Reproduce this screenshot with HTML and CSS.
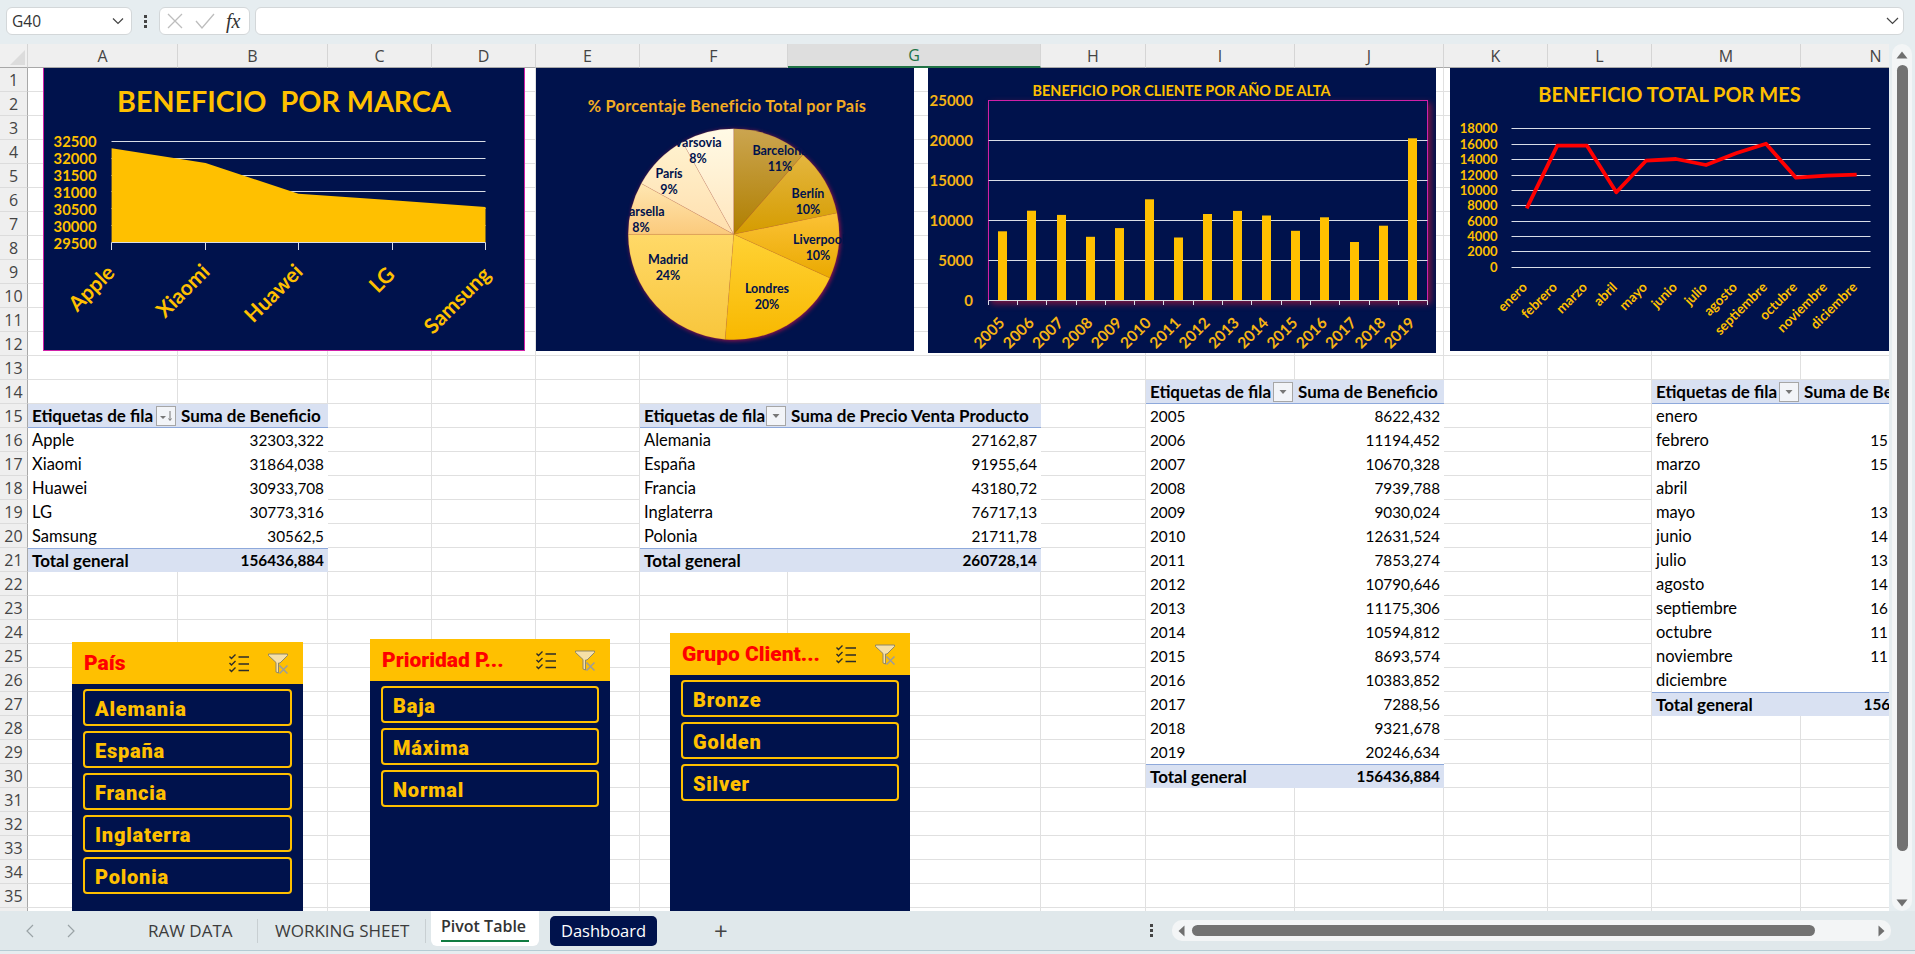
FILE: index.html
```html
<!DOCTYPE html>
<html lang="es">
<head>
    <meta charset="UTF-8">
    <title>Pivot Table</title>
    <link rel="stylesheet" href="styles.css">
</head>
<body>
    <svg class="icon-defs" width="0" height="0">
        <symbol id="icon-multi" viewBox="0 0 20 19">
            <path d="M0.500 2.500l2 2 4-4M0.500 9l2 2 4-4M0.500 15.500l2 2 4-4" fill="none" stroke="#2b2b2b" stroke-width="1.400"/>
            <path d="M9.500 3h10.500M9.500 10h10.500M9.500 16.500h10.500" fill="none" stroke="#2b2b2b" stroke-width="1.400"/>
        </symbol>
        <symbol id="icon-clear" viewBox="0 0 20 21">
            <path d="M0.500 1h19v1.500l-7.500 7.500h-1.500v10l-2.500-1v-9.500l-7.500-7z" fill="#f6e0a8" stroke="#8f8769" stroke-width="1"/>
            <path d="M11.500 12.500l8 8M19.500 12.500l-8 8" fill="none" stroke="#9c9c9c" stroke-width="1.500"/>
        </symbol>
    </svg>

    <!-- formula bar -->
    <div class="formula-bar">
        <div class="name-box">
            <span>G40</span>
            <svg width="12" height="8" viewBox="0 0 12 8"><path d="M1 1.500l5 5 5-5" fill="none" stroke="#444" stroke-width="1.200"/></svg>
        </div>
        <div class="bar-dots"><i></i><i></i><i></i></div>
        <div class="fx-box">
            <svg width="16" height="16" viewBox="0 0 16 16"><path d="M1 1l14 14M15 1L1 15" fill="none" stroke="#bdbdbd" stroke-width="1.300"/></svg>
            <svg width="20" height="16" viewBox="0 0 20 16"><path d="M1 8l6 7L19 1" fill="none" stroke="#bdbdbd" stroke-width="1.300"/></svg>
            <span class="fx-label">fx</span>
        </div>
        <div class="formula-input">
            <svg width="13" height="8" viewBox="0 0 13 8"><path d="M1 1l5.500 5.500L12 1" fill="none" stroke="#444" stroke-width="1.200"/></svg>
        </div>
    </div>

    <div class="workspace">
        <div class="sheet">
            <div class="corner"><svg width="15" height="15" viewBox="0 0 15 15"><path d="M15 0v15H0z" fill="#dcdcdc"/></svg></div>
            <div class="col-head">A</div>
            <div class="col-head">B</div>
            <div class="col-head">C</div>
            <div class="col-head">D</div>
            <div class="col-head">E</div>
            <div class="col-head">F</div>
            <div class="col-head col-selected">G</div>
            <div class="col-head">H</div>
            <div class="col-head">I</div>
            <div class="col-head">J</div>
            <div class="col-head">K</div>
            <div class="col-head">L</div>
            <div class="col-head">M</div>
            <div class="col-head">N</div>

            <div class="row-head">1</div><div class="row-head">2</div><div class="row-head">3</div>
            <div class="row-head">4</div><div class="row-head">5</div><div class="row-head">6</div>
            <div class="row-head">7</div><div class="row-head">8</div><div class="row-head">9</div>
            <div class="row-head">10</div><div class="row-head">11</div><div class="row-head">12</div>
            <div class="row-head">13</div><div class="row-head">14</div><div class="row-head">15</div>
            <div class="row-head">16</div><div class="row-head">17</div><div class="row-head">18</div>
            <div class="row-head">19</div><div class="row-head">20</div><div class="row-head">21</div>
            <div class="row-head">22</div><div class="row-head">23</div><div class="row-head">24</div>
            <div class="row-head">25</div><div class="row-head">26</div><div class="row-head">27</div>
            <div class="row-head">28</div><div class="row-head">29</div><div class="row-head">30</div>
            <div class="row-head">31</div><div class="row-head">32</div><div class="row-head">33</div>
            <div class="row-head">34</div><div class="row-head">35</div><div class="row-head"></div>

            <div class="gridlines">
                <i></i><i></i><i></i><i></i><i></i><i></i><i></i>
                <i></i><i></i><i></i><i></i><i></i><i></i><i></i>
            </div>

            <!-- pivot tables -->
            <div class="pivot pivot-brand">
                <div class="pv-head pv-label">Etiquetas de fila
                    <span class="pv-btn"><svg width="14" height="12" viewBox="0 0 14 12"><path d="M1 6h6l-3 3z" fill="#777"/><path d="M11 1v9M9.500 8.500l1.500 2 1.500-2" fill="none" stroke="#777"/></svg></span>
                </div>
                <div class="pv-head">Suma de Beneficio</div>
                <div class="pv-label">Apple</div><div class="pv-value">32303,322</div>
                <div class="pv-label">Xiaomi</div><div class="pv-value">31864,038</div>
                <div class="pv-label">Huawei</div><div class="pv-value">30933,708</div>
                <div class="pv-label">LG</div><div class="pv-value">30773,316</div>
                <div class="pv-label">Samsung</div><div class="pv-value">30562,5</div>
                <div class="pv-total pv-label">Total general</div><div class="pv-total pv-value">156436,884</div>
            </div>

            <div class="pivot pivot-country">
                <div class="pv-head pv-label">Etiquetas de fila
                    <span class="pv-btn"><svg width="8" height="6" viewBox="0 0 8 6"><path d="M0.500 1h7L4 5z" fill="#777"/></svg></span>
                </div>
                <div class="pv-head">Suma de Precio Venta Producto</div>
                <div class="pv-label">Alemania</div><div class="pv-value">27162,87</div>
                <div class="pv-label">España</div><div class="pv-value">91955,64</div>
                <div class="pv-label">Francia</div><div class="pv-value">43180,72</div>
                <div class="pv-label">Inglaterra</div><div class="pv-value">76717,13</div>
                <div class="pv-label">Polonia</div><div class="pv-value">21711,78</div>
                <div class="pv-total pv-label">Total general</div><div class="pv-total pv-value">260728,14</div>
            </div>

            <div class="pivot pivot-year">
                <div class="pv-head pv-label">Etiquetas de fila
                    <span class="pv-btn"><svg width="8" height="6" viewBox="0 0 8 6"><path d="M0.500 1h7L4 5z" fill="#777"/></svg></span>
                </div>
                <div class="pv-head">Suma de Beneficio</div>
                <div class="pv-label pv-num">2005</div><div class="pv-value">8622,432</div>
                <div class="pv-label pv-num">2006</div><div class="pv-value">11194,452</div>
                <div class="pv-label pv-num">2007</div><div class="pv-value">10670,328</div>
                <div class="pv-label pv-num">2008</div><div class="pv-value">7939,788</div>
                <div class="pv-label pv-num">2009</div><div class="pv-value">9030,024</div>
                <div class="pv-label pv-num">2010</div><div class="pv-value">12631,524</div>
                <div class="pv-label pv-num">2011</div><div class="pv-value">7853,274</div>
                <div class="pv-label pv-num">2012</div><div class="pv-value">10790,646</div>
                <div class="pv-label pv-num">2013</div><div class="pv-value">11175,306</div>
                <div class="pv-label pv-num">2014</div><div class="pv-value">10594,812</div>
                <div class="pv-label pv-num">2015</div><div class="pv-value">8693,574</div>
                <div class="pv-label pv-num">2016</div><div class="pv-value">10383,852</div>
                <div class="pv-label pv-num">2017</div><div class="pv-value">7288,56</div>
                <div class="pv-label pv-num">2018</div><div class="pv-value">9321,678</div>
                <div class="pv-label pv-num">2019</div><div class="pv-value">20246,634</div>
                <div class="pv-total pv-label">Total general</div><div class="pv-total pv-value">156436,884</div>
            </div>

            <div class="pivot pivot-month">
                <div class="pv-head pv-label">Etiquetas de fila
                    <span class="pv-btn"><svg width="8" height="6" viewBox="0 0 8 6"><path d="M0.500 1h7L4 5z" fill="#777"/></svg></span>
                </div>
                <div class="pv-head">Suma de Beneficio</div>
                <div class="pv-label">enero</div><div class="pv-value pv-cut"></div>
                <div class="pv-label">febrero</div><div class="pv-value pv-cut">15</div>
                <div class="pv-label">marzo</div><div class="pv-value pv-cut">15</div>
                <div class="pv-label">abril</div><div class="pv-value pv-cut"></div>
                <div class="pv-label">mayo</div><div class="pv-value pv-cut">13</div>
                <div class="pv-label">junio</div><div class="pv-value pv-cut">14</div>
                <div class="pv-label">julio</div><div class="pv-value pv-cut">13</div>
                <div class="pv-label">agosto</div><div class="pv-value pv-cut">14</div>
                <div class="pv-label">septiembre</div><div class="pv-value pv-cut">16</div>
                <div class="pv-label">octubre</div><div class="pv-value pv-cut">11</div>
                <div class="pv-label">noviembre</div><div class="pv-value pv-cut">11</div>
                <div class="pv-label">diciembre</div><div class="pv-value pv-cut"></div>
                <div class="pv-total pv-label">Total general</div><div class="pv-total pv-value">156436,884</div>
            </div>

            <!-- charts float over the cells, drawn in page coordinates -->
            <svg class="chart chart-brand" viewBox="43 68 482 283">
                <rect class="frame" x="43.500" y="67.500" width="481" height="283"/>
                <text class="t-gold t-brand-title" x="284" y="112">BENEFICIO  POR MARCA</text>
                <g class="axis-y t-gold t-brand-y">
                    <text x="96.500" y="146.500">32500</text>
                    <text x="96.500" y="163.500">32000</text>
                    <text x="96.500" y="180.500">31500</text>
                    <text x="96.500" y="197.500">31000</text>
                    <text x="96.500" y="214.500">30500</text>
                    <text x="96.500" y="231.500">30000</text>
                    <text x="96.500" y="248.500">29500</text>
                </g>
                <path class="grid" d="M111.500 141.500H485.500M111.500 158.500H485.500M111.500 175.500H485.500M111.500 191.500H485.500M111.500 208.500H485.500M111.500 225.500H485.500"/>
                <path class="area" d="M111.600 148.300L205.600 163L298.500 193.700L392.500 200.300L485.500 207V242.500H111.600z"/>
                <path class="grid" d="M111.500 242.500H485.500M111.500 242.500V250M205.500 242.500V250M298.500 242.500V250M392.500 242.500V250M485.500 242.500V250"/>
                <g class="axis-x t-gold t-brand-x">
                    <text x="116" y="274" transform="rotate(-45 116 274)">Apple</text>
                    <text x="211" y="273" transform="rotate(-45 211 273)">Xiaomi</text>
                    <text x="304" y="273" transform="rotate(-45 304 273)">Huawei</text>
                    <text x="396" y="276" transform="rotate(-45 396 276)">LG</text>
                    <text x="492" y="276" transform="rotate(-45 492 276)">Samsung</text>
                </g>
            </svg>

            <svg class="chart chart-pie" viewBox="536 68 378 283">
                <defs>
                    <linearGradient id="s1" x1="0" y1="0" x2="0" y2="1"><stop offset="0" stop-color="#cba550"/><stop offset="1" stop-color="#b07f00"/></linearGradient>
                    <linearGradient id="s2" x1="0" y1="0" x2="0" y2="1"><stop offset="0" stop-color="#e4b63f"/><stop offset="1" stop-color="#d59c00"/></linearGradient>
                    <linearGradient id="s3" x1="0" y1="0" x2="0" y2="1"><stop offset="0" stop-color="#fbc236"/><stop offset="1" stop-color="#eaa900"/></linearGradient>
                    <linearGradient id="s4" x1="0" y1="0" x2="0" y2="1"><stop offset="0" stop-color="#ffd235"/><stop offset="1" stop-color="#f8b800"/></linearGradient>
                    <linearGradient id="s5" x1="0" y1="0" x2="0" y2="1"><stop offset="0" stop-color="#ffd968"/><stop offset="1" stop-color="#f8c63c"/></linearGradient>
                    <linearGradient id="s6" x1="0" y1="0" x2="0" y2="1"><stop offset="0" stop-color="#ffe7b2"/><stop offset="1" stop-color="#fbca7c"/></linearGradient>
                    <linearGradient id="s7" x1="0" y1="0" x2="0" y2="1"><stop offset="0" stop-color="#fff2cf"/><stop offset="1" stop-color="#ffdfae"/></linearGradient>
                    <linearGradient id="s8" x1="0" y1="0" x2="0" y2="1"><stop offset="0" stop-color="#fffae6"/><stop offset="1" stop-color="#ffe6bd"/></linearGradient>
                </defs>
                <text class="t-pie-title" x="727" y="112">% Porcentaje Beneficio Total por País</text>
                <g class="pie">
                    <path fill="url(#s1)" d="M733.700 234.300V128.800A105.500 105.500 0 0 1 802.900 154.700z"/>
                    <path fill="url(#s2)" d="M733.700 234.300L802.900 154.700A105.500 105.500 0 0 1 837 213.100z"/>
                    <path fill="url(#s3)" d="M733.700 234.300L837 213.100A105.500 105.500 0 0 1 829.800 277.900z"/>
                    <path fill="url(#s4)" d="M733.700 234.300L829.800 277.900A105.500 105.500 0 0 1 725.100 339.400z"/>
                    <path fill="url(#s5)" d="M733.700 234.300L725.100 339.400A105.500 105.500 0 0 1 628.200 234.300z"/>
                    <path fill="url(#s6)" d="M733.700 234.300H628.200A105.500 105.500 0 0 1 641.300 183.500z"/>
                    <path fill="url(#s7)" d="M733.700 234.300L641.300 183.500A105.500 105.500 0 0 1 682.500 142z"/>
                    <path fill="url(#s8)" d="M733.700 234.300L682.500 142A105.500 105.500 0 0 1 733.700 128.800z"/>
                </g>
                <g class="t-pie">
                    <text x="780" y="155">Barcelona</text><text x="780" y="171">11%</text>
                    <text x="808" y="198">Berlín</text><text x="808" y="214">10%</text>
                    <text x="819" y="244">Liverpool</text><text x="818" y="260">10%</text>
                    <text x="767" y="293">Londres</text><text x="767" y="309">20%</text>
                    <text x="668" y="264">Madrid</text><text x="668" y="280">24%</text>
                    <text x="641" y="216">Marsella</text><text x="641" y="232">8%</text>
                    <text x="669" y="178">París</text><text x="669" y="194">9%</text>
                    <text x="698" y="147">Varsovia</text><text x="698" y="163">8%</text>
                </g>
            </svg>

            <svg class="chart chart-year" viewBox="928 68 508 285">
                <text class="t-gold t-year-title" x="1181.500" y="96">BENEFICIO POR CLIENTE POR AÑO DE ALTA</text>
                <rect class="plot" x="988.500" y="100.500" width="439" height="200"/>
                <g class="axis-y t-amber t-year-y">
                    <text x="973" y="106">25000</text>
                    <text x="973" y="146">20000</text>
                    <text x="973" y="186">15000</text>
                    <text x="973" y="226">10000</text>
                    <text x="973" y="266">5000</text>
                    <text x="973" y="306">0</text>
                </g>
                <path class="grid" d="M988.500 140.500H1427.500M988.500 180.500H1427.500M988.500 220.500H1427.500M988.500 260.500H1427.500"/>
                <g class="bars">
                    <rect x="998" y="231.300" width="9" height="69"/>
                    <rect x="1027" y="210.700" width="9" height="89.600"/>
                    <rect x="1057" y="214.900" width="9" height="85.400"/>
                    <rect x="1086" y="236.800" width="9" height="63.500"/>
                    <rect x="1115" y="228.100" width="9" height="72.200"/>
                    <rect x="1145" y="199.300" width="9" height="101"/>
                    <rect x="1174" y="237.500" width="9" height="62.800"/>
                    <rect x="1203" y="214" width="9" height="86.300"/>
                    <rect x="1233" y="210.900" width="9" height="89.400"/>
                    <rect x="1262" y="215.500" width="9" height="84.800"/>
                    <rect x="1291" y="230.800" width="9" height="69.500"/>
                    <rect x="1320" y="217.300" width="9" height="83"/>
                    <rect x="1350" y="242" width="9" height="58.300"/>
                    <rect x="1379" y="225.700" width="9" height="74.600"/>
                    <rect x="1408" y="138.300" width="9" height="162"/>
                </g>
                <path class="grid" d="M988.500 300.500H1427.500M988.500 300.500V305M1017.500 300.500V305M1046.500 300.500V305M1076.500 300.500V305M1105.500 300.500V305M1134.500 300.500V305M1163.500 300.500V305M1193.500 300.500V305M1222.500 300.500V305M1251.500 300.500V305M1281.500 300.500V305M1310.500 300.500V305M1339.500 300.500V305M1369.500 300.500V305M1398.500 300.500V305M1427.500 300.500V305"/>
                <g class="axis-x t-amber t-year-x">
                    <text x="1005.700" y="324" transform="rotate(-45 1005.700 324)">2005</text>
                    <text x="1035" y="324" transform="rotate(-45 1035 324)">2006</text>
                    <text x="1064.300" y="324" transform="rotate(-45 1064.300 324)">2007</text>
                    <text x="1093.600" y="324" transform="rotate(-45 1093.600 324)">2008</text>
                    <text x="1122.900" y="324" transform="rotate(-45 1122.900 324)">2009</text>
                    <text x="1152.200" y="324" transform="rotate(-45 1152.200 324)">2010</text>
                    <text x="1181.500" y="324" transform="rotate(-45 1181.500 324)">2011</text>
                    <text x="1210.800" y="324" transform="rotate(-45 1210.800 324)">2012</text>
                    <text x="1240.100" y="324" transform="rotate(-45 1240.100 324)">2013</text>
                    <text x="1269.400" y="324" transform="rotate(-45 1269.400 324)">2014</text>
                    <text x="1298.700" y="324" transform="rotate(-45 1298.700 324)">2015</text>
                    <text x="1328" y="324" transform="rotate(-45 1328 324)">2016</text>
                    <text x="1357.300" y="324" transform="rotate(-45 1357.300 324)">2017</text>
                    <text x="1386.600" y="324" transform="rotate(-45 1386.600 324)">2018</text>
                    <text x="1415.900" y="324" transform="rotate(-45 1415.900 324)">2019</text>
                </g>
            </svg>

            <svg class="chart chart-month" viewBox="1450 68 439 283">
                <text class="t-gold t-month-title" x="1669.500" y="102">BENEFICIO TOTAL POR MES</text>
                <g class="axis-y t-gold t-month-y">
                    <text x="1497.500" y="133">18000</text>
                    <text x="1497.500" y="148.500">16000</text>
                    <text x="1497.500" y="164">14000</text>
                    <text x="1497.500" y="179.500">12000</text>
                    <text x="1497.500" y="194.500">10000</text>
                    <text x="1497.500" y="210">8000</text>
                    <text x="1497.500" y="225.500">6000</text>
                    <text x="1497.500" y="241">4000</text>
                    <text x="1497.500" y="256">2000</text>
                    <text x="1497.500" y="271.500">0</text>
                </g>
                <path class="grid" d="M1511.500 128.500H1870.500M1511.500 144.500H1870.500M1511.500 159.500H1870.500M1511.500 175.500H1870.500M1511.500 190.500H1870.500M1511.500 205.500H1870.500M1511.500 221.500H1870.500M1511.500 236.500H1870.500M1511.500 251.500H1870.500M1511.500 267.500H1870.500"/>
                <polyline class="month-line" points="1526.700,208.300 1557.300,145.700 1587,145.700 1616.300,192.300 1646,160.700 1676,159 1706,165 1736,153.300 1766,143.700 1796,177.700 1826.700,175.700 1856.700,174.700"/>
                <g class="axis-x t-gold t-month-x">
                    <text x="1528" y="288" transform="rotate(-45 1528 288)">enero</text>
                    <text x="1558" y="288" transform="rotate(-45 1558 288)">febrero</text>
                    <text x="1588" y="288" transform="rotate(-45 1588 288)">marzo</text>
                    <text x="1618" y="288" transform="rotate(-45 1618 288)">abril</text>
                    <text x="1648" y="288" transform="rotate(-45 1648 288)">mayo</text>
                    <text x="1678" y="288" transform="rotate(-45 1678 288)">junio</text>
                    <text x="1708" y="288" transform="rotate(-45 1708 288)">julio</text>
                    <text x="1738" y="288" transform="rotate(-45 1738 288)">agosto</text>
                    <text x="1768" y="288" transform="rotate(-45 1768 288)">septiembre</text>
                    <text x="1798" y="288" transform="rotate(-45 1798 288)">octubre</text>
                    <text x="1828" y="288" transform="rotate(-45 1828 288)">noviembre</text>
                    <text x="1858" y="288" transform="rotate(-45 1858 288)">diciembre</text>
                </g>
            </svg>

            <!-- slicers -->
            <section class="slicer slicer-pais">
                <header class="slicer-head">
                    <span class="slicer-title">País</span>
                    <svg class="ic-multi"><use href="#icon-multi"/></svg>
                    <svg class="ic-clear"><use href="#icon-clear"/></svg>
                </header>
                <div class="slicer-list">
                    <div class="slicer-item">Alemania</div>
                    <div class="slicer-item">España</div>
                    <div class="slicer-item">Francia</div>
                    <div class="slicer-item">Inglaterra</div>
                    <div class="slicer-item">Polonia</div>
                </div>
            </section>
            <section class="slicer slicer-prioridad">
                <header class="slicer-head">
                    <span class="slicer-title">Prioridad P...</span>
                    <svg class="ic-multi"><use href="#icon-multi"/></svg>
                    <svg class="ic-clear"><use href="#icon-clear"/></svg>
                </header>
                <div class="slicer-list">
                    <div class="slicer-item">Baja</div>
                    <div class="slicer-item">Máxima</div>
                    <div class="slicer-item">Normal</div>
                </div>
            </section>
            <section class="slicer slicer-grupo">
                <header class="slicer-head">
                    <span class="slicer-title">Grupo Client...</span>
                    <svg class="ic-multi"><use href="#icon-multi"/></svg>
                    <svg class="ic-clear"><use href="#icon-clear"/></svg>
                </header>
                <div class="slicer-list">
                    <div class="slicer-item">Bronze</div>
                    <div class="slicer-item">Golden</div>
                    <div class="slicer-item">Silver</div>
                </div>
            </section>
        </div>

        <div class="vscroll">
            <svg width="12" height="8" viewBox="0 0 12 8"><path d="M6 0.500L11.500 7.500H0.500z" fill="#6f6f6f"/></svg>
            <div class="vscroll-thumb"></div>
            <svg width="12" height="8" viewBox="0 0 12 8"><path d="M6 7.500L11.500 0.500H0.500z" fill="#6f6f6f"/></svg>
        </div>
    </div>

    <!-- sheet tabs -->
    <div class="tabs">
        <svg class="tab-nav" width="8" height="14" viewBox="0 0 8 14"><path d="M7 1L1 7l6 6" fill="none" stroke="#9aa3a6" stroke-width="1.200"/></svg>
        <svg class="tab-nav tab-nav-next" width="8" height="14" viewBox="0 0 8 14"><path d="M1 1l6 6-6 6" fill="none" stroke="#9aa3a6" stroke-width="1.200"/></svg>
        <div class="tab tab-raw">RAW DATA</div>
        <div class="tab tab-sep tab-working">WORKING SHEET</div>
        <div class="tab tab-active"><span>Pivot Table</span></div>
        <div class="tab-dash">Dashboard</div>
        <span class="tab-add">+</span>
        <div class="bar-dots tab-dots"><i></i><i></i><i></i></div>
        <div class="hscroll">
            <svg width="7" height="12" viewBox="0 0 7 12"><path d="M6.500 0.500V11.500L0.500 6z" fill="#6f6f6f"/></svg>
            <div class="hscroll-thumb"></div>
            <svg width="7" height="12" viewBox="0 0 7 12"><path d="M0.500 0.500V11.500L6.500 6z" fill="#6f6f6f"/></svg>
        </div>
    </div>
</body>
</html>
```
FILE: styles.css
```css
:root {
    --cols: 150px 150px 104px 104px 104px 148px 253px 105px 149px 149px 104px 104px 149px 150px;
    --navy: #00124c;
    --gold: #ffc000;
}
* {
    box-sizing: border-box;
}
body {
    margin: 0;
    width: 1915px;
    height: 954px;
    overflow: hidden;
    background-color: #e6edf0;
    display: flex;
    flex-direction: column;
    font-family: "Open Sans", "Liberation Sans", sans-serif;
    color: #000;
}
.icon-defs {
    position: absolute;
}

/* formula bar */
.formula-bar {
    height: 44px;
    flex: none;
    display: flex;
    padding: 7px 11px 9px 6px;
}
.name-box, .fx-box, .formula-input {
    background-color: #fff;
    border: 1px solid #d3d7d9;
    border-radius: 6px;
    display: flex;
    align-items: center;
}
.name-box {
    width: 126px;
    padding: 0 7px 0 5px;
    justify-content: space-between;
    font-size: 15.500px;
    color: #333;
}
.bar-dots {
    width: 27px;
    display: flex;
    flex-direction: column;
    align-items: center;
    justify-content: center;
    gap: 2px;
}
.bar-dots i {
    width: 3px;
    height: 3px;
    background-color: #444;
}
.fx-box {
    width: 91px;
    margin-right: 5px;
    padding-left: 7px;
    gap: 12px;
}
.fx-label {
    font-family: "Liberation Serif", serif;
    font-style: italic;
    font-size: 20px;
    color: #333;
    margin-left: -1px;
}
.formula-input {
    flex: 1;
    justify-content: flex-end;
    padding-right: 4px;
}

/* sheet */
.workspace {
    height: 867px;
    flex: none;
    display: flex;
}
.sheet {
    position: relative;
    width: 1889px;
    overflow: hidden;
    background-color: #fff;
    display: grid;
    grid-template-columns: 28px var(--cols);
    grid-template-rows: 24px repeat(36, 24px);
}
.corner {
    background-color: #f0f0f0;
    border-right: 1px solid #d5d5d5;
    border-bottom: 1px solid #a8a8a8;
    padding: 4px 0 0 10px;
}
.col-head {
    background-color: #efefef;
    border-right: 1px solid #d5d5d5;
    border-bottom: 1px solid #a8a8a8;
    display: flex;
    align-items: center;
    justify-content: center;
    font-size: 16px;
    color: #444;
}
.col-selected {
    background-color: #dedede;
    border-bottom: 2px solid #217346;
    color: #217346;
}
.row-head {
    grid-column: 1;
    background-color: #efefef;
    border-right: 1px solid #a8a8a8;
    border-bottom: 1px solid #dcdcdc;
    display: flex;
    align-items: center;
    justify-content: center;
    font-size: 16px;
    color: #444;
}
.gridlines {
    grid-column: 2 / -1;
    grid-row: 2 / -1;
    display: grid;
    grid-template-columns: var(--cols);
    background-image: repeating-linear-gradient(to bottom, transparent 0 23px, #e0e0e0 23px 24px);
}
.gridlines i {
    border-right: 1px solid #e0e0e0;
}

/* pivot tables */
.pivot {
    background-color: #fff;
    display: grid;
    grid-auto-rows: 24px;
    font-family: "Lato", "Liberation Sans", sans-serif;
    font-size: 16.500px;
    line-height: 24px;
    white-space: nowrap;
    z-index: 1;
}
.pivot-brand {
    grid-column: 2 / 4;
    grid-row: 16 / 23;
    grid-template-columns: 150px 150px;
}
.pivot-country {
    grid-column: 7 / 9;
    grid-row: 16 / 23;
    grid-template-columns: 148px 253px;
}
.pivot-year {
    grid-column: 10 / 12;
    grid-row: 15 / 32;
    grid-template-columns: 149px 149px;
}
.pivot-month {
    grid-column: 14 / 16;
    grid-row: 15 / 29;
    grid-template-columns: 149px 150px;
}
.pv-head {
    background-color: #d9e1f2;
    border-bottom: 1px solid #8ea9db;
    font-size: 17px;
    font-weight: 700;
    padding-left: 3px;
    overflow: hidden;
}
.pv-label {
    padding-left: 4px;
    display: flex;
    justify-content: space-between;
    align-items: center;
}
.pv-num, .pv-value {
    font-size: 15.300px;
}
.pv-value {
    text-align: right;
    padding-right: 4px;
}
.pv-cut {
    padding-right: 63px;
}
.pv-btn {
    width: 20px;
    height: 20px;
    margin-right: 2px;
    flex: none;
    background-color: #f2f4f8;
    border: 1px solid #a6a6a6;
    display: flex;
    align-items: center;
    justify-content: center;
}
.pv-total {
    background-color: #d9e1f2;
    border-top: 1px solid #8ea9db;
    font-weight: 700;
    line-height: 22px;
}
.pv-total.pv-label {
    font-size: 17px;
}

/* charts */
.chart {
    position: absolute;
    background-color: var(--navy);
    z-index: 2;
    font-family: "Lato", "Liberation Sans", sans-serif;
    font-weight: 700;
}
.chart-brand { left: 43px; top: 24px; width: 482px; height: 283px; }
.chart-pie { left: 536px; top: 24px; width: 378px; height: 283px; }
.chart-year { left: 928px; top: 24px; width: 508px; height: 285px; }
.chart-month { left: 1450px; top: 24px; width: 439px; height: 283px; }
.frame {
    fill: none;
    stroke: #d020a8;
}
.grid {
    fill: none;
    stroke: #d9dde6;
}
.area, .bars {
    fill: var(--gold);
}
.t-gold {
    fill: var(--gold);
    text-anchor: middle;
}
.t-amber {
    fill: #f6b414;
}
.axis-y {
    text-anchor: end;
}
.axis-x {
    text-anchor: end;
}
.t-brand-title {
    font-size: 28.700px;
    white-space: pre;
}
.t-brand-y { font-size: 14.800px; }
.t-brand-x { font-size: 21px; }
.t-pie-title {
    fill: #f4ac22;
    font-size: 16.300px;
    text-anchor: middle;
    letter-spacing: 0.300px;
}
.pie {
    filter: drop-shadow(1px 1px 2px #a0124a);
}
.pie path {
    stroke: rgba(160, 110, 30, 0.25);
    stroke-width: 0.500;
}
.t-pie {
    fill: #00124c;
    font-size: 12.500px;
    text-anchor: middle;
}
.t-year-title { font-size: 14.400px; }
.plot {
    fill: var(--navy);
    stroke: #d020a8;
    filter: drop-shadow(3px 3px 3px #7a1440);
}
.t-year-y { font-size: 15px; }
.t-year-x { font-size: 15.500px; }
.t-month-title { font-size: 20px; }
.t-month-y { font-size: 13px; }
.t-month-x { font-size: 13.500px; }
.month-line {
    fill: none;
    stroke: #ff0000;
    stroke-width: 3.800;
    stroke-linejoin: round;
}

/* slicers */
.slicer {
    position: absolute;
    bottom: 0;
    background-color: var(--navy);
    z-index: 2;
    font-family: "Roboto", "Liberation Sans", sans-serif;
    font-weight: 900;
}
.slicer-pais { left: 72px; top: 598px; width: 231px; }
.slicer-prioridad { left: 370px; top: 595px; width: 240px; }
.slicer-grupo { left: 670px; top: 589px; width: 240px; }
.slicer-head {
    height: 42px;
    background-color: var(--gold);
    display: flex;
    align-items: center;
    padding: 0 15px 0 12px;
}
.slicer-title {
    flex: 1;
    color: #ff0000;
    font-size: 21px;
    white-space: nowrap;
}
.ic-multi {
    width: 20px;
    height: 19px;
    margin-right: 19px;
    flex: none;
}
.ic-clear {
    width: 20px;
    height: 21px;
    flex: none;
}
.slicer-list {
    padding: 5px 11px;
    display: flex;
    flex-direction: column;
    gap: 4.600px;
}
.slicer-item {
    height: 37.400px;
    border: 2px solid var(--gold);
    border-radius: 4px;
    color: var(--gold);
    font-size: 20px;
    letter-spacing: 0.800px;
    display: flex;
    align-items: center;
    padding: 2px 0 0 10px;
}

/* vertical scrollbar */
.vscroll {
    width: 20px;
    margin-left: 3px;
    background-color: #f3f5f6;
    border-radius: 10px;
    display: flex;
    flex-direction: column;
    align-items: center;
    padding: 7px 0 4px;
}
.vscroll-thumb {
    width: 11px;
    height: 786px;
    margin: 6px 0 auto;
    background-color: #727272;
    border-radius: 6px;
}

/* tabs */
.tabs {
    height: 40px;
    flex: none;
    background-color: #e0e8eb;
    border-bottom: 1px solid #b5cbd3;
    display: flex;
    align-items: center;
    font-size: 17px;
    color: #3c3c3c;
    padding-left: 26px;
}
.tab-nav-next {
    margin-left: 33px;
}
.tab {
    white-space: nowrap;
}
.tab-raw {
    margin-left: 73px;
    width: 110px;
    border-right: 1px solid #c8cfd2;
    line-height: 24px;
}
.tab-working {
    width: 168px;
    padding-left: 17px;
    border-right: 1px solid #c8cfd2;
    line-height: 24px;
}
.tab-active {
    margin-left: 5px;
    width: 108px;
    height: 35px;
    margin-bottom: 5px;
    background-color: #fff;
    border-radius: 0 0 6px 6px;
    padding: 3px 10px 0;
    font-size: 16px;
    font-weight: 600;
    color: #333;
}
.tab-active span {
    display: block;
    height: 28px;
    line-height: 24px;
    border-bottom: 2px solid #107c41;
}
.tab-dash {
    margin-left: 11px;
    width: 107px;
    height: 30px;
    background-color: var(--navy);
    border-radius: 5px;
    color: #fff;
    font-size: 16.500px;
    display: flex;
    align-items: center;
    justify-content: center;
}
.tab-add {
    margin-left: 57px;
    font-size: 24px;
    line-height: 24px;
    color: #444;
}
.tab-dots {
    margin-left: auto;
    margin-right: 7px;
}
.hscroll {
    width: 719px;
    height: 21px;
    margin-right: 24px;
    background-color: #f3f5f6;
    border-radius: 10px;
    display: flex;
    align-items: center;
    padding: 0 6px;
}
.hscroll-thumb {
    width: 623px;
    height: 11px;
    margin: 0 auto 0 7px;
    background-color: #727272;
    border-radius: 6px;
}
```
